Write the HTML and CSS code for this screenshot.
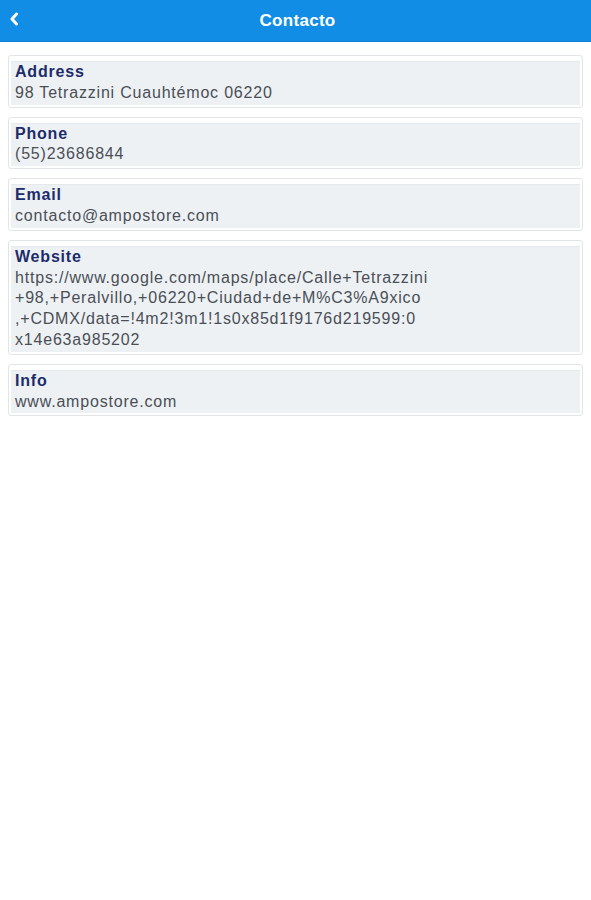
FILE: index.html
```html
<!DOCTYPE html>
<html lang="es">
<head>
  <meta charset="UTF-8" />
  <meta name="viewport" content="width=device-width, initial-scale=1.0" />
  <title>Contacto</title>
  <link rel="stylesheet" href="styles.css">
</head>
<body>
  <header class="topbar">
    <a href="#" class="back">
      <svg width="10" height="14" viewBox="0 0 10 14"><path d="M7.5 2 L3 7 L7.5 12" fill="none" stroke="#fff" stroke-width="3" stroke-linecap="round" stroke-linejoin="round"/></svg>
    </a>
    <h1>Contacto</h1>
  </header>
  <main class="contact-list">
    <div class="card">
      <div class="card-inner">
        <div class="label">Address</div>
        <div class="value">98 Tetrazzini Cuauhtémoc 06220</div>
      </div>
    </div>
    <div class="card">
      <div class="card-inner">
        <div class="label">Phone</div>
        <div class="value">(55)23686844</div>
      </div>
    </div>
    <div class="card">
      <div class="card-inner">
        <div class="label">Email</div>
        <div class="value">contacto@ampostore.com</div>
      </div>
    </div>
    <div class="card">
      <div class="card-inner">
        <div class="label">Website</div>
        <div class="value">https://www.google.com/maps/place/Calle+Tetrazzini<br>+98,+Peralvillo,+06220+Ciudad+de+M%C3%A9xico<br>,+CDMX/data=!4m2!3m1!1s0x85d1f9176d219599:0<br>x14e63a985202</div>
      </div>
    </div>
    <div class="card">
      <div class="card-inner">
        <div class="label">Info</div>
        <div class="value">www.ampostore.com</div>
      </div>
    </div>
  </main>
</body>
</html>
```

FILE: styles.css
```css
body {
  margin: 0;
  font-family: 'Liberation Sans', Arial, sans-serif;
  background: #fff;
}
.topbar {
  height: 42px;
  background: #118de6;
  border-bottom: 1px solid #0b7fd2;
  box-sizing: border-box;
  display: flex;
  align-items: center;
  justify-content: center;
  position: relative;
}
.topbar h1 {
  margin: 0 0 0 4px;
  color: #fff;
  font-size: 17px;
  font-weight: bold;
  letter-spacing: 0.3px;
  line-height: 44px;
}
.back {
  position: absolute;
  left: 9px;
  top: 12px;
  display: flex;
}
.contact-list {
  padding: 13px 8px;
  display: flex;
  flex-direction: column;
  gap: 9px;
}
.card {
  border: 1px solid #e2e5e8;
  border-radius: 3px;
  padding: 5px 2px 2px;
  background: #fff;
}
.card-inner {
  background: #eef1f4;
  border-top: 1px solid #e6e9ec;
  padding: 0 5px 1px 4px;
  line-height: 20.8px;
  font-size: 16px;
  letter-spacing: 0.8px;
}
.label {
  font-weight: bold;
  color: #1c2c6a;
}
.value {
  color: #4a4f56;
}
```
